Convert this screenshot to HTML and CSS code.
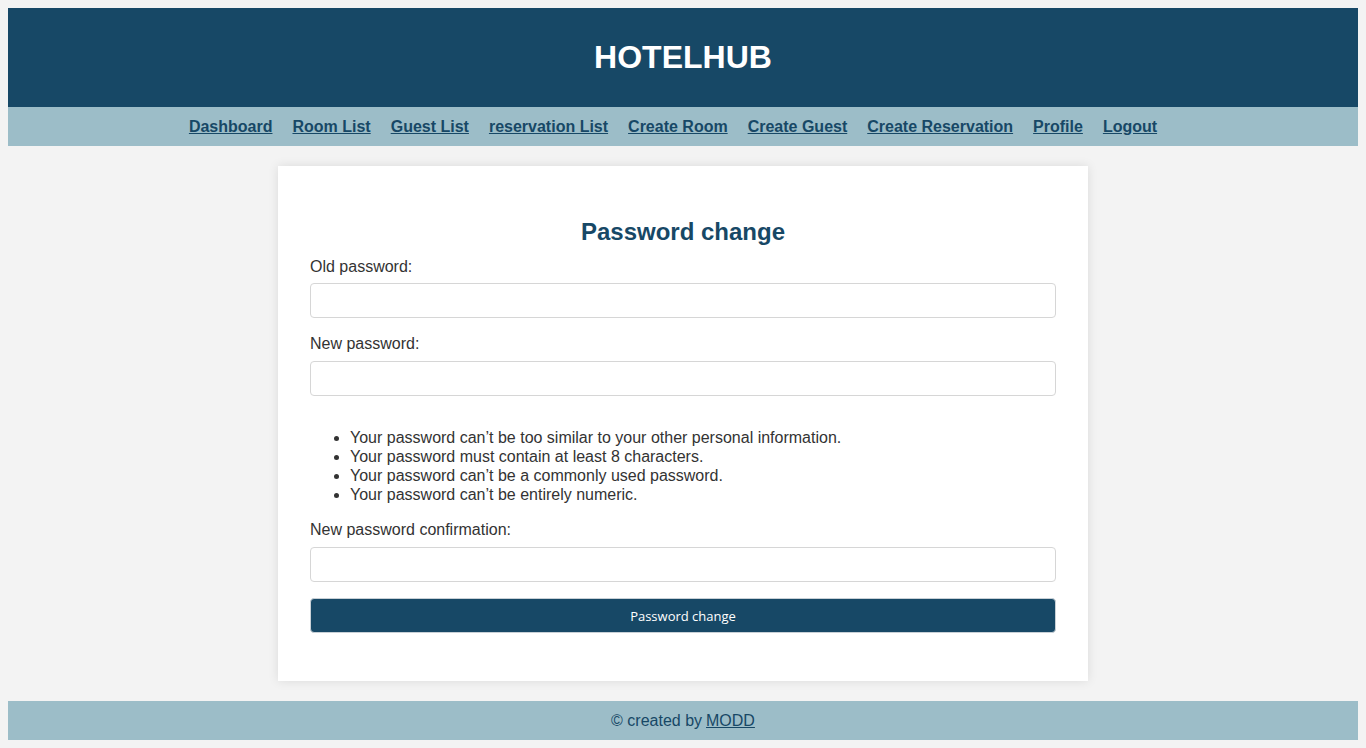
FILE: index.html
```html
<!DOCTYPE html>
<html lang="en">
<head>
<meta charset="utf-8">
<title>HotelHub - Password change</title>
<link rel="stylesheet" href="styles.css">
</head>
<body>
<header class="site-header">
  <h1 class="brand">HOTELHUB</h1>
</header>
<nav class="site-nav">
  <a href="#">Dashboard</a>
  <a href="#">Room List</a>
  <a href="#">Guest List</a>
  <a href="#">reservation List</a>
  <a href="#">Create Room</a>
  <a href="#">Create Guest</a>
  <a href="#">Create Reservation</a>
  <a href="#">Profile</a>
  <a href="#">Logout</a>
</nav>
<main class="card">
  <h2 class="card-title">Password change</h2>
  <form class="form">
    <label class="label label-first" for="old">Old password:</label>
    <input class="input" id="old" type="password">
    <label class="label" for="new1">New password:</label>
    <input class="input" id="new1" type="password">
    <ul class="help">
      <li>Your password can’t be too similar to your other personal information.</li>
      <li>Your password must contain at least 8 characters.</li>
      <li>Your password can’t be a commonly used password.</li>
      <li>Your password can’t be entirely numeric.</li>
    </ul>
    <label class="label" for="new2">New password confirmation:</label>
    <input class="input" id="new2" type="password">
    <button class="btn" type="button">Password change</button>
  </form>
</main>
<footer class="site-footer">© created by <a href="#">MODD</a></footer>
</body>
</html>
```

FILE: styles.css
```css
html, body {
  background: #f3f3f3;
}
body {
  margin: 8px;
  font-family: "Liberation Sans", Arial, sans-serif;
  font-size: 16px;
  color: #333;
}
.site-header {
  background: #174866;
  height: 99px;
  display: flex;
  align-items: center;
  justify-content: center;
}
.brand {
  margin: 0;
  color: #fff;
  font-size: 32px;
  font-weight: bold;
  line-height: 37px;
}
.site-nav {
  background: #9cbdc8;
  height: 39px;
  display: flex;
  align-items: center;
  justify-content: center;
}
.site-nav a {
  color: #174866;
  font-weight: bold;
  text-decoration: underline;
  margin-right: 20px;
}
.card {
  width: 810px;
  box-sizing: border-box;
  margin: 20px auto;
  background: #fff;
  padding: 32px 32px 48px;
  box-shadow: 0 0 10px rgba(0, 0, 0, 0.1);
}
.card-title {
  margin: 20px 0 0;
  text-align: center;
  color: #174866;
  font-size: 24px;
  line-height: 28px;
  font-weight: bold;
}
.form {
  display: flex;
  flex-direction: column;
}
.label {
  display: block;
  line-height: 19px;
  margin: 16px 0 8px;
}
.label-first {
  margin-top: 11px;
  margin-bottom: 7px;
}
.input {
  box-sizing: border-box;
  height: 35px;
  width: 100%;
  border: 1px solid #d6d6d6;
  border-radius: 4px;
  margin: 0;
  padding: 6px 10px;
  font-size: 16px;
  background: #fff;
}
.help {
  margin: 32px 0 0;
  padding-left: 40px;
  line-height: 19px;
}
.btn {
  margin-top: 16px;
  height: 35px;
  width: 100%;
  background: #174866;
  color: #fff;
  border: 1px solid #c8d0d6;
  border-radius: 4px;
  font-family: "Open Sans", sans-serif;
  font-size: 13px;
}
.site-footer {
  background: #9cbdc8;
  height: 39px;
  display: flex;
  align-items: center;
  justify-content: center;
  color: #174866;
  gap: 4px;
}
.site-footer a {
  color: #174866;
  text-decoration: underline;
}
```
